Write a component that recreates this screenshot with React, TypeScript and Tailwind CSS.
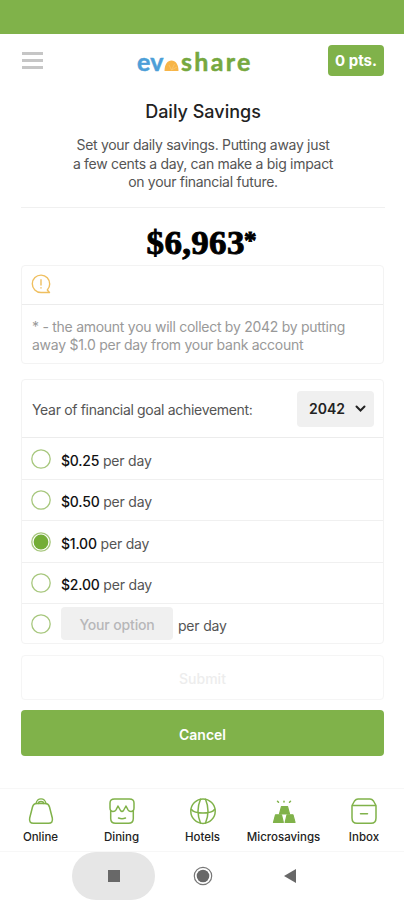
import type { ReactNode } from 'react';

const GREEN = '#80b24a';

function Logo() {
  return (
    <div className="ml-[94px] flex h-[30px] w-[116px] items-baseline whitespace-nowrap font-[Lato] text-[25px] leading-[30px] font-bold">
      <span className="w-[27px] tracking-[0.3px] text-[#4d9fd8] [-webkit-text-stroke:0.5px_#4d9fd8]">ev</span>
      <svg className="w-[15px] shrink-0" height="11" viewBox="0 0 15 11">
        <path d="M0.5 11C0.5 4.500 3.5 0.5 7.5 0.5S14.5 4.500 14.5 11Z" fill="#f7b548" />
        <path d="M7.5 10 5 5M7.5 10 10.500 4M7.500 10 13 7" stroke="#fccf7d" strokeWidth="0.6" />
      </svg>
      <span className="ml-[2px] tracking-[2.3px] text-[#76a83f] [-webkit-text-stroke:0.5px_#76a83f]">share</span>
    </div>
  );
}

function Icon({ children, width = 1.5 }: { children: ReactNode; width?: number }) {
  return (
    <svg width="28" height="28" viewBox="0 0 28 28" fill="none" stroke={GREEN} strokeWidth={width} strokeLinecap="round" strokeLinejoin="round">
      {children}
    </svg>
  );
}

const tabs = [
  {
    label: 'Online',
    width: 'w-[81px]',
    icon: (
      <Icon>
        <path d="M9.500 6.500H18.500Q21.500 6.500 22.500 10L25.300 21Q26.300 26.300 21.500 26.300H6.500Q1.700 26.300 2.700 21L5.500 10Q6.500 6.500 9.500 6.500Z" />
        <path d="M9 6.500Q10 1.800 14 1.800T19 6.500M11 6.500Q11.500 4.500 14 4.500T17 6.500" strokeWidth="1.300" />
      </Icon>
    ),
  },
  {
    label: 'Dining',
    width: 'w-[81px]',
    icon: (
      <Icon>
        <path d="M6.500 2H21.500Q26 2 26 6V11Q26 14.500 23 14.500Q21 14.500 20 12.800L18 9L15.500 13.500Q14 15.500 12.500 13.500L10 9L8 12.800Q7 14.500 5 14.500Q2 14.500 2 11V6Q2 2 6.500 2Z" />
        <path d="M2.700 14V21.500Q2.700 26.300 7.500 26.300H20.500Q25.300 26.300 25.300 21.500V14M10.500 21Q14 22.500 17.500 21" />
      </Icon>
    ),
  },
  {
    label: 'Hotels',
    width: 'w-[81px]',
    icon: (
      <Icon>
        <circle cx="14" cy="14.200" r="12.200" />
        <path d="M11.500 2.300Q6.500 14 11.500 26.100M16.500 2.300Q21.500 14 16.500 26.100M2.500 12.500Q5 16 14 16T25.500 12.500" />
      </Icon>
    ),
  },
  {
    label: 'Microsavings',
    width: 'w-[81px]',
    icon: (
      <Icon width={1.2}>
        <g fill={GREEN}>
          <path d="M11.500 9.500H17.500L19.500 17H9.500Z" />
          <path d="M5.500 17.800H11.500L13.300 25.500H3.500Z" />
          <path d="M17 17.800H23L25 25.500H15.200Z" />
        </g>
        <path d="M14 4.200v.8M7.500 4.200l1 1M20.500 4.200l-1 1" strokeWidth="1.500" />
      </Icon>
    ),
  },
  {
    label: 'Inbox',
    width: 'w-[80px]',
    icon: (
      <Icon>
        <path d="M2 8.500H26V21Q26 26.300 21 26.300H7Q2 26.300 2 21ZM2 8.500L4.500 4Q6 2 8 2H20Q22 2 23.500 4L26 8.500M10.500 16.800H17.500" />
      </Icon>
    ),
  },
];

function Radio({ checked = false }: { checked?: boolean }) {
  return (
    <svg width="20" height="20" viewBox="0 0 20 20" fill="none" className="shrink-0">
      <circle cx="10" cy="10" r="9.200" stroke="#a7c77d" strokeWidth="1.300" />
      {checked && <circle cx="10" cy="10" r="7.400" fill="#74ad37" />}
    </svg>
  );
}

const options = [
  { amount: '$0.25', height: 'h-[42px]' },
  { amount: '$0.50', height: 'h-[41px]' },
  { amount: '$1.00', height: 'h-[42px]', checked: true },
  { amount: '$2.00', height: 'h-[41px]' },
];

export default function App() {
  return (
    <div className="flex h-[900px] w-[404px] flex-col overflow-hidden bg-white font-[Inter] text-[#555]">
      <div className="h-[34px] shrink-0 bg-[#80b24a]" />

      <header className="flex h-[53px] shrink-0 items-center pr-5 pl-[22px]">
        <div className="flex w-[21px] flex-col gap-[4px]">
          <i className="h-[3px] bg-[#c6c6c6]" />
          <i className="h-[3px] bg-[#c6c6c6]" />
          <i className="h-[3px] bg-[#c6c6c6]" />
        </div>
        <Logo />
        <div className="ml-auto flex h-[31px] w-[56px] items-center justify-center rounded-[4px] bg-[#80b24a] pt-[2px] text-[15px] font-bold whitespace-nowrap text-white">
          0 pts.
        </div>
      </header>

      <section className="mr-[19px] ml-[21px] flex h-[121px] shrink-0 flex-col items-center border-b border-[#f0f0f0] pt-[13px] text-center">
        <h1 className="text-[18px] leading-[24px] font-medium text-[#222]">Daily Savings</h1>
        <p className="mt-[12px] text-[14px] leading-[18.500px] tracking-[-0.300px] whitespace-nowrap">
          Set your daily savings. Putting away just
          <br />a few cents a day, can make a big impact
          <br />
          on your financial future.
        </p>
      </section>

      <div className="flex h-[57px] shrink-0 items-center justify-center pt-[11px] font-['Liberation_Serif'] text-[34px] font-bold text-black [-webkit-text-stroke:0.9px_black]">
        <span className="scale-x-[1.03] tracking-[0.3px]">$6,963</span>
        <span className="-mt-[2px] ml-[1px] text-[25px]">*</span>
      </div>

      <section className="mr-[20px] ml-[21px] h-[99px] shrink-0 rounded-[4px] border border-[#f3f3f3]">
        <div className="flex h-[39px] items-center border-b border-[#ececec] pl-[9px]">
          <svg width="20" height="20" viewBox="0 0 20 20" fill="none" stroke="#efbf60" strokeWidth="1.400" strokeLinecap="round" strokeLinejoin="round" className="-mt-[2px]">
            <path d="M18.500 18.500H10A8.700 8.700 0 1 1 18.700 10C18.700 12.500 17.700 14.500 16.300 16ZM10 5.700v5.300M10 13.700v.4" />
          </svg>
        </div>
        <p className="pt-[13px] pl-[10px] text-[14px] leading-[18px] tracking-[-0.270px] whitespace-nowrap text-[#999]">
          * - the amount you will collect by 2042 by putting
          <br />
          away $1.0 per day from your bank account
        </p>
      </section>

      <section className="mt-[15px] mr-[20px] ml-[21px] h-[265px] shrink-0 rounded-[4px] border border-[#f3f3f3]">
        <div className="flex h-[58px] items-center justify-between border-b border-[#ececec] pr-[9px] pl-[10px]">
          <span className="pt-[2px] text-[14px] tracking-[-0.320px] whitespace-nowrap">Year of financial goal achievement:</span>
          <button className="flex h-[36px] w-[77px] items-center justify-between rounded-[4px] bg-[#f0f0f0] pr-[8px] pl-[12px] text-[14px] font-semibold text-[#222]">
            2042
            <svg width="11" height="8" viewBox="0 0 11 8" fill="none" stroke="#222" strokeWidth="2" strokeLinecap="round">
              <path d="m1.500 1.500 4 4 4-4" />
            </svg>
          </button>
        </div>
        {options.map((option) => (
          <div key={option.amount} className={`flex items-center border-b border-[#f0f0f0] pl-[9px] ${option.height}`}>
            <Radio checked={option.checked} />
            <span className="ml-[10px] pt-[3px] text-[14px] tracking-[-0.200px] whitespace-nowrap">
              <b className="font-medium text-[#111]">{option.amount}</b> per day
            </span>
          </div>
        ))}
        <div className="flex h-[39px] items-center pl-[9px]">
          <Radio />
          <div className="ml-[10px] flex h-[33px] w-[112px] items-center justify-center rounded-[4px] bg-[#f0f0f0] pt-[2px] text-[14px] font-medium tracking-[-0.150px] text-[#b7b7b9]">
            Your option
          </div>
          <span className="ml-[5px] pt-[3px] text-[14px] tracking-[-0.200px] whitespace-nowrap">per day</span>
        </div>
      </section>

      <button className="mt-[11px] mr-[20px] ml-[21px] h-[45px] shrink-0 rounded-[4px] border border-[#f5f5f5] pt-[2px] text-[14px] font-medium text-[#ededed]">
        Submit
      </button>
      <button className="mt-[10px] mr-[20px] ml-[21px] h-[46px] shrink-0 rounded-[4px] bg-[#80b24a] pt-[3px] text-[14px] font-semibold text-white">
        Cancel
      </button>

      <nav className="mt-[32px] flex h-[64px] shrink-0 border-y border-[#f7f7f7]">
        {tabs.map((tab) => (
          <div key={tab.label} className={`flex shrink-0 flex-col items-center pt-[8px] ${tab.width}`}>
            {tab.icon}
            <span className="mt-[4px] text-[11.500px] leading-[16px] font-medium whitespace-nowrap text-[#222]">{tab.label}</span>
          </div>
        ))}
      </nav>

      <div className="flex h-[48px] shrink-0 items-center pl-[72px]">
        <div className="flex h-[48px] w-[83px] items-center justify-center rounded-full bg-[#e6e6e6]">
          <div className="h-[12px] w-[12px] bg-[#686868]" />
        </div>
        <svg className="ml-[38px]" width="20" height="20" viewBox="0 0 20 20">
          <circle cx="10" cy="10" r="8.700" fill="none" stroke="#777" strokeWidth="1.200" />
          <circle cx="10" cy="10" r="6.300" fill="#686868" />
        </svg>
        <svg className="ml-[71px]" width="12" height="14" viewBox="0 0 12 14" fill="#686868">
          <path d="M12 0V14L0 7Z" />
        </svg>
      </div>
    </div>
  );
}
